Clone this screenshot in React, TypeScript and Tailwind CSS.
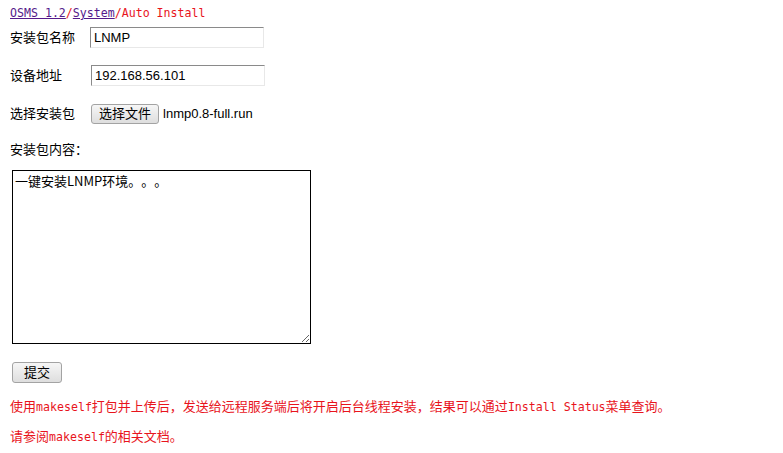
import React from 'react';

const sans = "font-['Liberation_Sans','Noto_Sans_CJK_SC',sans-serif]";
const mono = "font-['DejaVu_Sans_Mono','Noto_Sans_CJK_SC',monospace]";

const Field: React.FC<{ label: string; children: React.ReactNode }> = ({ label, children }) => (
  <div className="flex items-center h-[21px]">
    <span className="w-[80px] shrink-0">{label}</span>
    {children}
  </div>
);

const inputCls =
  'w-[174px] h-[21px] px-[3px] border border-t-[#8a8a8a] border-l-[#8a8a8a] border-r-[#e8e8e8] border-b-[#e8e8e8] bg-white text-[13px] text-black outline-none';

export default function App() {
  return (
    <div className={`w-[783px] h-[453px] bg-white text-black text-[13px] [text-spacing-trim:space-all] ${sans}`}>
      <div className="pl-[10px] pt-[4px]">
        {/* Breadcrumb */}
        <div className={`${mono} text-[11.6px] leading-[18px] h-[18px]`}>
          <a href="#" className="text-[#551a8b] underline">OSMS 1.2</a>
          <span className="text-[#e8141c]">/</span>
          <a href="#" className="text-[#551a8b] underline">System</a>
          <span className="text-[#e8141c]">/Auto Install</span>
        </div>

        <div className="flex flex-col gap-[17px] mt-[5px]">
          <Field label="安装包名称">
            <input className={inputCls} defaultValue="LNMP" />
          </Field>
          <Field label="设备地址">
            <input className={`${inputCls} ml-[1px]`} defaultValue="192.168.56.101" />
          </Field>
          <Field label="选择安装包">
            <button className="ml-[1px] h-[20px] px-[7px] border border-[#a3a3a3] rounded-[3px] bg-gradient-to-b from-[#f6f6f6] to-[#dedede] text-[13px] leading-none">
              选择文件
            </button>
            <span className="ml-[4px]">lnmp0.8-full.run</span>
          </Field>
        </div>

        <div className="mt-[16px] h-[18px] leading-[18px] font-['Noto_Sans_CJK_SC',sans-serif]">安装包内容：</div>

        <textarea
          className="block mt-[12px] ml-[2px] w-[299px] h-[174px] border border-black px-[2px] py-[1px] font-['Noto_Sans_CJK_SC',sans-serif] text-[13px] leading-[18px] outline-none resize"
          defaultValue="一键安装LNMP环境。。。"
        />

        <button className="block mt-[18px] ml-[2px] w-[50px] h-[21px] border border-[#a3a3a3] rounded-[3px] bg-gradient-to-b from-[#f6f6f6] to-[#dedede] text-[13px] leading-none">
          提交
        </button>

        <div className="text-[#e8141c] mt-[15px] leading-[18px]">
          <p>
            使用<span className={`${mono} text-[11.6px]`}>makeself</span>打包并上传后，发送给远程服务端后将开启后台线程安装，结果可以通过
            <span className={`${mono} text-[11.6px]`}>Install Status</span>菜单查询。
          </p>
          <p className="mt-[12px]">
            请参阅<span className={`${mono} text-[11.6px]`}>makeself</span>的相关文档。
          </p>
        </div>
      </div>
    </div>
  );
}
